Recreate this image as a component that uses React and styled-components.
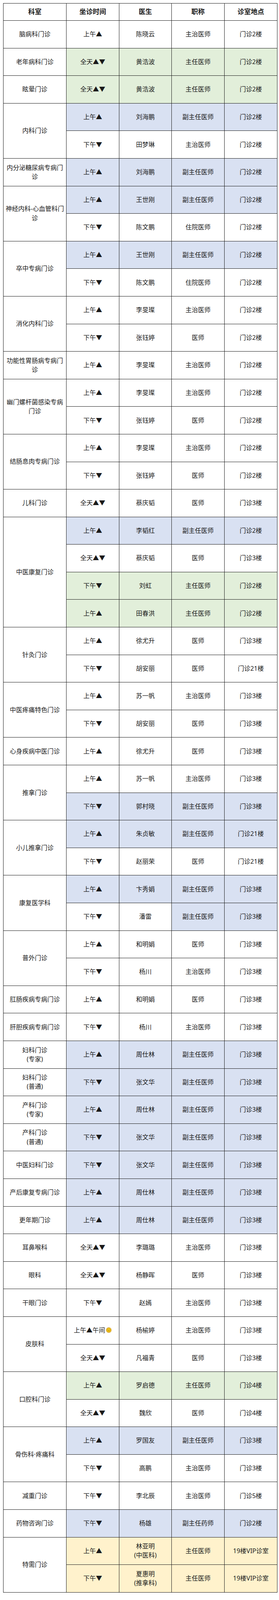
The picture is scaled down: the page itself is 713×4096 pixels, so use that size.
import React from 'react';
import styled, { createGlobalStyle } from 'styled-components';

const Global = createGlobalStyle`
  html, body { margin: 0; padding: 0; background: #fff; }
  body { padding: 8px 0 0 8px; font-family: "Noto Sans", "Noto Sans CJK SC", sans-serif; color: #1a1a1a; }
`;

const BG = { w: '#ffffff', g: '#e2efda', b: '#d9e1f2', y: '#fff2cc' };

const Table = styled.table`
  width: 700px;
  table-layout: fixed;
  border-collapse: collapse;
  border: 1px solid #1a1a1a;
  font-size: 16px;
  line-height: 1.45;
`;

const HeadCell = styled.th`
  height: 43px;
  padding: 0 4px;
  border: 1px solid #1a1a1a;
  font-weight: 700;
  font-size: 17px;
  text-align: center;
  vertical-align: middle;
  background: #fff;
`;

const Row = styled.tr`
  height: 70.6px;
`;

const DeptCell = styled.td`
  padding: 0 4px;
  border: 1px solid #1a1a1a;
  text-align: center;
  vertical-align: middle;
  background: #fff;
  white-space: pre-line;
`;

const Cell = styled.td`
  padding: 0 2px;
  border: 1px solid #1a1a1a;
  text-align: center;
  vertical-align: middle;
  white-space: pre-line;
  background: ${(p) => BG[p.$bg] || '#fff'};
`;

const SunWrap = styled.span`
  display: inline-block;
  width: 16px;
  height: 16px;
  vertical-align: -2px;
  margin-left: 1px;
`;

const Sun = () => (
  <SunWrap>
    <svg width="16" height="16" viewBox="0 0 32 32">
      <g fill="#f5b400" stroke="#b07800" strokeWidth="0.8">
        {Array.from({ length: 12 }).map((_, i) => {
          const a = (i * Math.PI * 2) / 12;
          const x = 16 + Math.cos(a) * 15;
          const y = 16 + Math.sin(a) * 15;
          const a1 = a + 0.35, a2 = a - 0.35;
          return (
            <polygon
              key={i}
              points={`${x},${y} ${16 + Math.cos(a1) * 10},${16 + Math.sin(a1) * 10} ${16 + Math.cos(a2) * 10},${16 + Math.sin(a2) * 10}`}
            />
          );
        })}
      </g>
      <circle cx="16" cy="16" r="10" fill="#ffd21e" stroke="#b07800" strokeWidth="1" />
      <circle cx="12.5" cy="14" r="1.4" fill="#4a3000" />
      <circle cx="19.5" cy="14" r="1.4" fill="#4a3000" />
      <path d="M11.5 18.5 Q16 23 20.5 18.5" fill="none" stroke="#4a3000" strokeWidth="1.4" strokeLinecap="round" />
    </svg>
  </SunWrap>
);

const A = '上午▲', P = '下午▼', F = '全天▲▼';

const groups = [
  ['脑病科门诊', [[A, '陈晓云', '主治医师', '门诊2楼', 'w']]],
  ['老年病科门诊', [[F, '黄浩波', '主任医师', '门诊2楼', 'g']]],
  ['眩晕门诊', [[F, '黄浩波', '主任医师', '门诊2楼', 'g']]],
  ['内科门诊', [[A, '刘海鹏', '副主任医师', '门诊2楼', 'b'], [P, '田梦琳', '主治医师', '门诊2楼', 'w']]],
  ['内分泌糖尿病专病门诊', [[A, '刘海鹏', '副主任医师', '门诊2楼', 'b']]],
  ['神经内科-心血管科门诊', [[A, '王世刚', '副主任医师', '门诊2楼', 'b'], [P, '陈文鹏', '住院医师', '门诊2楼', 'w']]],
  ['卒中专病门诊', [[A, '王世刚', '副主任医师', '门诊2楼', 'b'], [P, '陈文鹏', '住院医师', '门诊2楼', 'w']]],
  ['消化内科门诊', [[A, '李旻璨', '主治医师', '门诊2楼', 'w'], [P, '张钰婷', '医师', '门诊2楼', 'w']]],
  ['功能性胃肠病专病门诊', [[A, '李旻璨', '主治医师', '门诊2楼', 'w']]],
  ['幽门螺杆菌感染专病门诊', [[A, '李旻璨', '主治医师', '门诊2楼', 'w'], [P, '张钰婷', '医师', '门诊2楼', 'w']]],
  ['结肠息肉专病门诊', [[A, '李旻璨', '主治医师', '门诊2楼', 'w'], [P, '张钰婷', '医师', '门诊2楼', 'w']]],
  ['儿科门诊', [[F, '蔡庆韬', '医师', '门诊3楼', 'w']]],
  ['中医康复门诊', [
    [A, '李韬红', '副主任医师', '门诊2楼', 'b'],
    [F, '蔡庆韬', '医师', '门诊3楼', 'w'],
    [P, '刘虹', '主任医师', '门诊2楼', 'g'],
    [A, '田春洪', '主任医师', '门诊2楼', 'g'],
  ]],
  ['针灸门诊', [[A, '徐尤升', '医师', '门诊3楼', 'w'], [P, '胡安丽', '医师', '门诊21楼', 'w']]],
  ['中医疼痛特色门诊', [[A, '苏一帆', '主治医师', '门诊3楼', 'w'], [P, '胡安丽', '医师', '门诊3楼', 'w']]],
  ['心身疾病中医门诊', [[A, '徐尤升', '医师', '门诊3楼', 'w']]],
  ['推拿门诊', [[A, '苏一帆', '主治医师', '门诊3楼', 'w'], [P, '郭村晓', '副主任医师', '门诊3楼', 'b']]],
  ['小儿推拿门诊', [[A, '朱贞敏', '副主任医师', '门诊21楼', 'b'], [P, '赵丽荣', '医师', '门诊21楼', 'w']]],
  ['康复医学科', [[A, '卞秀娟', '副主任医师', '门诊3楼', 'b'], [P, '潘雷', '副主任医师', '门诊3楼', ['w', 'w', 'b', 'b']]]],
  ['普外门诊', [[A, '和明娟', '医师', '门诊3楼', 'w'], [P, '杨川', '主治医师', '门诊3楼', 'w']]],
  ['肛肠疾病专病门诊', [[A, '和明娟', '医师', '门诊3楼', 'w']]],
  ['肝胆疾病专病门诊', [[P, '杨川', '主治医师', '门诊3楼', 'w']]],
  ['妇科门诊\n(专家)', [[A, '周仕林', '副主任医师', '门诊3楼', 'b']]],
  ['妇科门诊\n(普通)', [[P, '张文华', '副主任医师', '门诊3楼', 'b']]],
  ['产科门诊\n(专家)', [[A, '周仕林', '副主任医师', '门诊3楼', 'b']]],
  ['产科门诊\n(普通)', [[P, '张文华', '副主任医师', '门诊3楼', 'b']]],
  ['中医妇科门诊', [[P, '张文华', '副主任医师', '门诊3楼', 'b']]],
  ['产后康复专病门诊', [[A, '周仕林', '副主任医师', '门诊3楼', 'b']]],
  ['更年期门诊', [[A, '周仕林', '副主任医师', '门诊3楼', 'b']]],
  ['耳鼻喉科', [[F, '李璐璐', '主治医师', '门诊3楼', 'w']]],
  ['眼科', [[F, '杨静晖', '医师', '门诊3楼', 'w']]],
  ['干眼门诊', [[P, '赵嫣', '主治医师', '门诊3楼', 'w']]],
  ['皮肤科', [['SUN', '杨榆婷', '主治医师', '门诊3楼', 'w'], [F, '凡福青', '医师', '门诊3楼', 'w']]],
  ['口腔科门诊', [[A, '罗启德', '主任医师', '门诊4楼', 'g'], [F, '魏欣', '医师', '门诊4楼', 'w']]],
  ['骨伤科·疼痛科', [[A, '罗国友', '副主任医师', '门诊3楼', 'b'], [P, '高鹏', '主治医师', '门诊3楼', 'w']]],
  ['减重门诊', [[P, '李北辰', '主治医师', '门诊5楼', 'w']]],
  ['药物咨询门诊', [[P, '杨雄', '副主任药师', '门诊2楼', 'b']]],
  ['特需门诊', [
    [A, '林亚明\n(中医科)', '主任医师', '19楼VIP诊室', 'y'],
    [P, '夏惠明\n(推拿科)', '主任医师', '19楼VIP诊室', 'y'],
  ]],
];

const renderTime = (t) =>
  t === 'SUN' ? (
    <>
      上午▲午间
      <Sun />
    </>
  ) : (
    t
  );

export default function App() {
  return (
    <>
      <Global />
      <Table>
        <colgroup>
          <col style={{ width: 161 }} />
          <col style={{ width: 135 }} />
          <col style={{ width: 134 }} />
          <col style={{ width: 135 }} />
          <col style={{ width: 135 }} />
        </colgroup>
        <thead>
          <tr>
            <HeadCell>科室</HeadCell>
            <HeadCell>坐诊时间</HeadCell>
            <HeadCell>医生</HeadCell>
            <HeadCell>职称</HeadCell>
            <HeadCell>诊室地点</HeadCell>
          </tr>
        </thead>
        <tbody>
          {groups.map(([dept, rows], gi) =>
            rows.map((r, ri) => {
              const bgs = Array.isArray(r[4]) ? r[4] : [r[4], r[4], r[4], r[4]];
              return (
                <Row key={`${gi}-${ri}`}>
                  {ri === 0 && <DeptCell rowSpan={rows.length}>{dept}</DeptCell>}
                  <Cell $bg={bgs[0]}>{renderTime(r[0])}</Cell>
                  <Cell $bg={bgs[1]}>{r[1]}</Cell>
                  <Cell $bg={bgs[2]}>{r[2]}</Cell>
                  <Cell $bg={bgs[3]}>{r[3]}</Cell>
                </Row>
              );
            })
          )}
        </tbody>
      </Table>
    </>
  );
}
